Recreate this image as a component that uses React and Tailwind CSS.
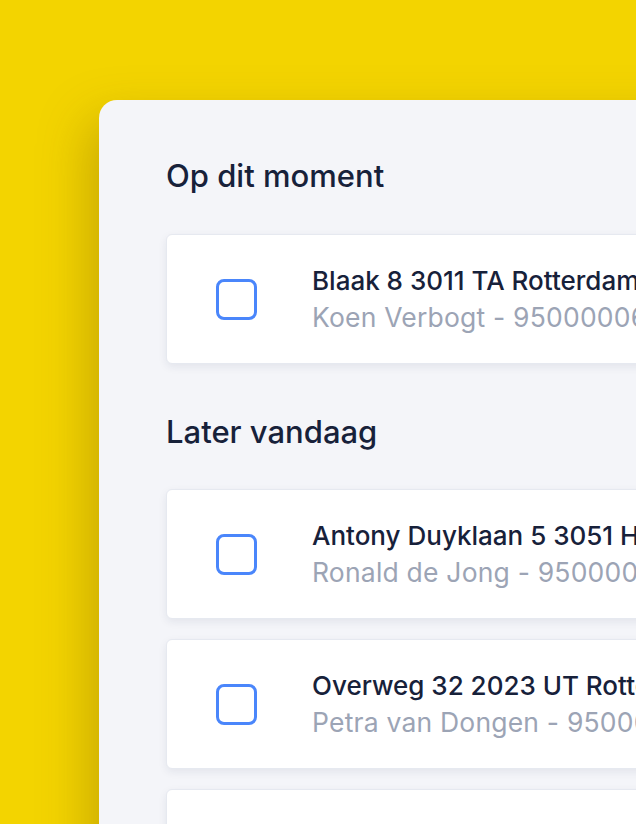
import React from "react";

const Task = ({ title, subtitle }) => (
  <div className="flex items-center h-[130px] w-[560px] shrink-0 bg-white rounded-md border border-[#e6e9f0] shadow-[0_3px_8px_rgba(30,40,80,0.08)]">
    <div className="ml-[49px] w-[41px] h-[41px] shrink-0 rounded-[8px] border-[3px] border-[#4a86fb]" />
    <div className="ml-[55px] flex flex-col whitespace-nowrap">
      <span className="text-[26px] leading-[37px] font-medium text-[#17213a]">{title}</span>
      <span className="text-[26.5px] leading-[37px] tracking-[0.2px] text-[#9ca4b5]">{subtitle}</span>
    </div>
  </div>
);

const App = () => {
  return (
    <div
      className="w-[636px] h-[824px] overflow-hidden bg-[#f3d400] pl-[99px] pt-[100px]"
      style={{ fontFamily: "Inter, 'Noto Sans', sans-serif" }}
    >
      <div className="w-[600px] h-[800px] bg-[#f4f5f9] rounded-tl-[18px] pl-[67px] pt-[54px] shadow-[-10px_20px_50px_rgba(120,90,0,0.35)]">
        <h2 className="text-[31px] leading-[44px] font-medium text-[#17213a]">Op dit moment</h2>
        <div className="mt-[36px] flex flex-col gap-[20px]">
          <Task title="Blaak 8 3011 TA Rotterdam" subtitle="Koen Verbogt - 950000061" />
        </div>
        <h2 className="mt-[46px] text-[31px] leading-[44px] font-medium text-[#17213a]">Later vandaag</h2>
        <div className="mt-[35px] flex flex-col gap-[20px]">
          <Task title="Antony Duyklaan 5 3051 HA Rotterdam" subtitle="Ronald de Jong - 950000072" />
          <Task title="Overweg 32 2023 UT Rotterdam" subtitle="Petra van Dongen - 950000083" />
          <Task title="Weena 505 3013 AL Rotterdam" subtitle="Sanne de Vries - 950000094" />
        </div>
      </div>
    </div>
  );
};

export default App;
